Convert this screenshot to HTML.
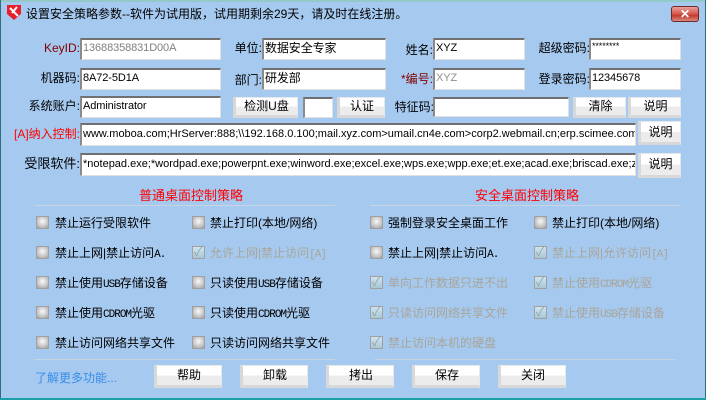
<!DOCTYPE html>
<html><head><meta charset="utf-8"><style>
*{margin:0;padding:0;box-sizing:border-box}
body{width:706px;height:400px;overflow:hidden;background:#a6c9ef;font-family:"Liberation Sans","Noto Sans CJK SC",sans-serif;font-size:12px;color:#000;position:relative}
.a{position:absolute;white-space:nowrap}
.in{position:absolute;background:#fff;border-top:2px solid #707070;border-left:2px solid #8a8a8a;border-right:1px solid #e0e0e0;border-bottom:1px solid #e0e0e0;padding:0 1px;line-height:17px;overflow:hidden;white-space:nowrap;font-size:11px;letter-spacing:-0.1px}
.lb{position:absolute;text-align:right;line-height:20px}
.bt{position:absolute;background:linear-gradient(#fff 0,#fff 50%,#ececec 50%);border:1px solid #e8e8e8;border-left:3px solid #d8d8d8;border-bottom:3px solid #d8d8d8;text-align:center;font-size:12px;line-height:17px}
.cb{position:absolute;width:13px;height:13px;background:radial-gradient(circle at 50% 40%,#fafafa,#bdbdbd 70%,#9a9a9a);border:1px solid #a0a0a0}
.cb.d{background:linear-gradient(#cfe3f2,#a9c7d6);}
.cb.d:after{content:"✓";position:absolute;left:1px;top:-4px;font-size:12px;color:#8fa9a0}
.ct{position:absolute;font-size:12px;line-height:16px;white-space:nowrap}
.ct span{font-family:"Liberation Mono",monospace;font-size:11px;letter-spacing:-1px}
.g{color:#a8a59a}
</style></head><body>
<div class="a" style="left:0;top:0;width:706px;height:2px;background:#94c9c9"></div>
<div class="a" style="left:0;top:0;width:1px;height:400px;background:#2f6d7a"></div>
<div class="a" style="right:0;top:0;width:1px;height:400px;background:#2f6d7a"></div>
<div class="a" style="left:0;bottom:0;width:706px;height:2px;background:#1a9fa8"></div>
<svg class="a" style="left:6px;top:4px" width="16" height="16" viewBox="0 0 16 16"><path d="M1 1h14v9l-7 6-7-6z" fill="#e8202a"/><path d="M4 4l8 8M11 3l-5 6" stroke="#fff" stroke-width="2"/></svg>
<div class="a" style="left:26px;top:5px;font-size:12px">设置安全策略参数--软件为试用版，试用期剩余29天，请及时在线注册。</div>
<div class="a" style="left:671px;top:6px;width:28px;height:16px;border-radius:3px;border:1px solid #6e2a2a;background:linear-gradient(#e8a09a,#d5574c 50%,#c33a2e 60%,#d88a80);color:#fff;text-align:center;font-weight:bold;font-size:12px;line-height:14px">✕</div>

<div class="lb" style="left:0;width:80px;top:38px;color:#800000">KeyID:</div>
<div class="in" style="left:80px;top:38px;width:141px;height:22px;color:#808080">13688358831D00A</div>
<div class="lb" style="left:222px;width:40px;top:38px">单位:</div>
<div class="in" style="left:262px;top:38px;width:124px;height:22px;font-size:12px">数据安全专家</div>
<div class="lb" style="left:390px;width:43px;top:40px">姓名:</div>
<div class="in" style="left:433px;top:38px;width:92px;height:22px">XYZ</div>
<div class="lb" style="left:530px;width:60px;top:38px">超级密码:</div>
<div class="in" style="left:589px;top:38px;width:92px;height:22px;font-size:9px;line-height:12px">********</div>

<div class="lb" style="left:0;width:80px;top:68px">机器码:</div>
<div class="in" style="left:80px;top:68px;width:141px;height:22px">8A72-5D1A</div>
<div class="lb" style="left:222px;width:40px;top:70px">部门:</div>
<div class="in" style="left:262px;top:68px;width:124px;height:22px;font-size:12px">研发部</div>
<div class="lb" style="left:390px;width:43px;top:69px;color:#800000">*编号:</div>
<div class="in" style="left:433px;top:68px;width:92px;height:22px;color:#909090">XYZ</div>
<div class="lb" style="left:530px;width:60px;top:69px">登录密码:</div>
<div class="in" style="left:589px;top:68px;width:92px;height:22px">12345678</div>

<div class="lb" style="left:0;width:80px;top:96px">系统账户:</div>
<div class="in" style="left:80px;top:96px;width:141px;height:22px">Administrator</div>
<div class="bt" style="left:233px;top:97px;width:65px;height:21px">检测U盘</div>
<div class="in" style="left:303px;top:97px;width:30px;height:21px"></div>
<div class="bt" style="left:337px;top:97px;width:48px;height:21px">认证</div>
<div class="lb" style="left:380px;width:54px;top:97px">特征码:</div>
<div class="in" style="left:433px;top:97px;width:136px;height:20px"></div>
<div class="bt" style="left:573px;top:97px;width:53px;height:21px">清除</div>
<div class="bt" style="left:628px;top:97px;width:53px;height:21px">说明</div>

<div class="lb" style="left:0;width:80px;top:124px;color:#ff0000">[A]纳入控制:</div>
<div class="in" style="left:80px;top:123px;width:556px;height:23px;line-height:19px;letter-spacing:0">www.moboa.com;HrServer:888;\\192.168.0.100;mail.xyz.com&gt;umail.cn4e.com&gt;corp2.webmail.cn;erp.scimee.com:50</div>
<div class="bt" style="left:638px;top:121px;width:43px;height:24px;line-height:20px">说明</div>
<div class="lb" style="left:0;width:80px;top:154px;font-size:13px">受限软件:</div>
<div class="in" style="left:80px;top:153px;width:556px;height:23px;line-height:19px;letter-spacing:0">*notepad.exe;*wordpad.exe;powerpnt.exe;winword.exe;excel.exe;wps.exe;wpp.exe;et.exe;acad.exe;briscad.exe;zwc</div>
<div class="bt" style="left:638px;top:153px;width:43px;height:25px;line-height:21px">说明</div>

<div class="a" style="left:139px;top:185px;color:#ff0000;font-size:13px">普通桌面控制策略</div>
<div class="a" style="left:475px;top:185px;color:#ff0000;font-size:13px">安全桌面控制策略</div>
<div class="a" style="left:35px;top:205px;width:300px;height:1px;background:#c8d4df"></div>
<div class="a" style="left:370px;top:205px;width:310px;height:1px;background:#c8d4df"></div>

<div class="cb" style="left:36px;top:216px"></div><div class="ct" style="left:55px;top:215px">禁止运行受限软件</div>
<div class="cb" style="left:192px;top:216px"></div><div class="ct" style="left:210px;top:215px">禁止打印(本地/网络)</div>
<div class="cb" style="left:370px;top:216px"></div><div class="ct" style="left:388px;top:215px">强制登录安全桌面工作</div>
<div class="cb" style="left:534px;top:216px"></div><div class="ct" style="left:552px;top:215px">禁止打印(本地/网络)</div>

<div class="cb" style="left:36px;top:246px"></div><div class="ct" style="left:55px;top:245px">禁止上网|禁止访问<span>A.</span></div>
<div class="cb d" style="left:192px;top:246px"></div><div class="ct g" style="left:210px;top:245px">允许上网|禁止访问<span>[A]</span></div>
<div class="cb" style="left:370px;top:246px"></div><div class="ct" style="left:388px;top:245px">禁止上网|禁止访问<span>A.</span></div>
<div class="cb d" style="left:534px;top:246px"></div><div class="ct g" style="left:552px;top:245px">禁止上网|允许访问<span>[A]</span></div>

<div class="cb" style="left:36px;top:276px"></div><div class="ct" style="left:55px;top:275px">禁止使用<span>USB</span>存储设备</div>
<div class="cb" style="left:192px;top:276px"></div><div class="ct" style="left:210px;top:275px">只读使用<span>USB</span>存储设备</div>
<div class="cb d" style="left:370px;top:276px"></div><div class="ct g" style="left:388px;top:275px">单向工作数据只进不出</div>
<div class="cb d" style="left:534px;top:276px"></div><div class="ct g" style="left:552px;top:275px">禁止使用<span>CDROM</span>光驱</div>

<div class="cb" style="left:36px;top:306px"></div><div class="ct" style="left:55px;top:305px">禁止使用<span>CDROM</span>光驱</div>
<div class="cb" style="left:192px;top:306px"></div><div class="ct" style="left:210px;top:305px">只读使用<span>CDROM</span>光驱</div>
<div class="cb d" style="left:370px;top:306px"></div><div class="ct g" style="left:388px;top:305px">只读访问网络共享文件</div>
<div class="cb d" style="left:534px;top:306px"></div><div class="ct g" style="left:552px;top:305px">禁止使用<span>USB</span>存储设备</div>

<div class="cb" style="left:36px;top:336px"></div><div class="ct" style="left:55px;top:335px">禁止访问网络共享文件</div>
<div class="cb" style="left:192px;top:336px"></div><div class="ct" style="left:210px;top:335px">只读访问网络共享文件</div>
<div class="cb d" style="left:370px;top:336px"></div><div class="ct g" style="left:388px;top:335px">禁止访问本机的硬盘</div>

<div class="a" style="left:35px;top:359px;width:300px;height:1px;background:#c8d4df"></div>
<div class="a" style="left:375px;top:359px;width:300px;height:1px;background:#c8d4df"></div>
<div class="a" style="left:35px;top:369px;color:#3a8ee6;font-size:12px">了解更多功能...</div>
<div class="bt" style="left:154px;top:365px;width:68px;height:23px;line-height:19px">帮助</div>
<div class="bt" style="left:240px;top:365px;width:68px;height:23px;line-height:19px">卸载</div>
<div class="bt" style="left:326px;top:365px;width:68px;height:23px;line-height:19px">拷出</div>
<div class="bt" style="left:412px;top:365px;width:68px;height:23px;line-height:19px">保存</div>
<div class="bt" style="left:498px;top:365px;width:68px;height:23px;line-height:19px">关闭</div>
</body></html>
